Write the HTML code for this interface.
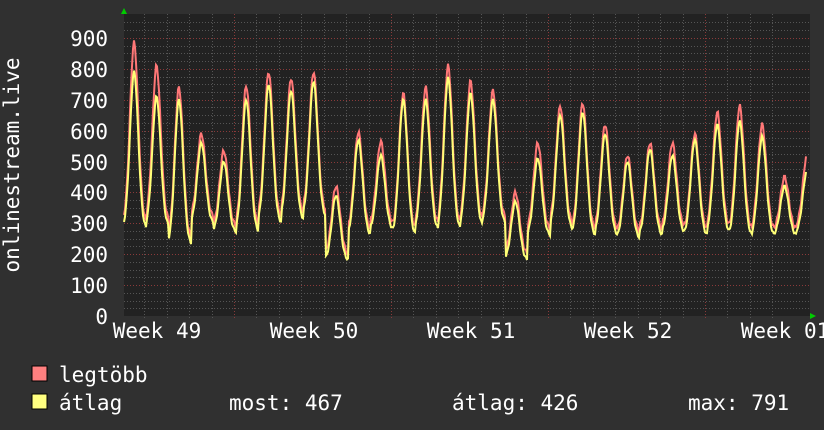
<!DOCTYPE html>
<html><head><meta charset="utf-8"><style>
html,body{margin:0;padding:0;background:#303030;}
svg{display:block}
text{font-family:"DejaVu Sans Mono","Liberation Mono",monospace;fill:#fff;font-size:21px}
</style></head><body>
<svg id="g" width="824" height="430" xmlns="http://www.w3.org/2000/svg">
<rect width="824" height="430" fill="#303030"/>
<rect x="124" y="14" width="686" height="302" fill="#222"/>
<g id="grid"></g>
<polyline id="red" fill="none" stroke="#ff7777" stroke-width="2"/>
<polyline id="yel" fill="none" stroke="#ffff77" stroke-width="2"/>
<polygon points="121,14 127,14 124,8" fill="#0c0"/>
<polygon points="810,313 810,319 816,316" fill="#0c0"/>
<g text-anchor="end">
<text x="108" y="46">900</text><text x="108" y="77">800</text><text x="108" y="108">700</text>
<text x="108" y="139">600</text><text x="108" y="170">500</text><text x="108" y="200">400</text>
<text x="108" y="231">300</text><text x="108" y="262">200</text><text x="108" y="293">100</text>
<text x="108" y="324">0</text>
</g>
<g text-anchor="middle">
<text x="157" y="338">Week 49</text><text x="314" y="338">Week 50</text>
<text x="471" y="338">Week 51</text><text x="628" y="338">Week 52</text>
<text x="785" y="338">Week 01</text>
</g>
<text transform="translate(19,165) rotate(-90)" text-anchor="middle">onlinestream.live</text>
<rect x="32" y="366" width="15" height="15" fill="#ff8080" stroke="#000"/>
<rect x="32" y="394" width="15" height="15" fill="#ffff80" stroke="#000"/>
<text x="59" y="382">legtöbb</text>
<text x="59" y="410">átlag</text>
<text x="229" y="410">most: 467</text>
<text x="452" y="410">átlag: 426</text>
<text x="688" y="410">max: 791</text>
</svg>
<script>
var NS="http://www.w3.org/2000/svg",g=document.getElementById('grid');
function ln(x1,y1,x2,y2,c){var l=document.createElementNS(NS,'line');l.setAttribute('x1',x1);l.setAttribute('y1',y1);l.setAttribute('x2',x2);l.setAttribute('y2',y2);l.setAttribute('stroke',c);l.setAttribute('stroke-width',1);l.setAttribute('stroke-dasharray','1,2');g.appendChild(l);}
function Y(v){return 316-v*0.309;}
for(var v=25;v<=950;v+=25){var y=Math.round(Y(v))+.5;if(y<14)break;ln(124,y,810,y,v%100==0?'#8a3a3a':'#555');}
for(var i=0;i<32;i++){var x=Math.round(77+i*22.43)+.5;if(x<124||x>810)continue;ln(x,14,x,320,((i)%7==0)?'#8a3a3a':'#555');}
var pk=[[885,790],[810,710],[740,700],[590,560],[535,500],[745,700],[790,750],[770,730],[790,760],[420,390],[595,570],[565,520],[720,700],[740,700],[810,770],[760,720],[730,700],[400,370],[560,510],[680,650],[690,660],[620,590],[520,500],[560,540],[560,520],[590,570],[660,620],[680,630],[620,580],[450,420],[520,470]];
var tr=[280,290,230,300,270,270,300,310,320,180,260,280,260,280,280,290,300,180,260,280,260,260,250,260,270,260,270,260,260,260,270];
var r=[],yl=[];
for(var x=124;x<=806;x++){var t=(x-124)/22.43,d=Math.floor(t),f=t-d;d=Math.min(d,pk.length-1);
var s=Math.exp(-Math.pow((f-0.45)/0.26,2));var sh=(f>0.1&&f<0.8)?0.12:0;s=Math.max(s,sh);
var wig=Math.sin(x*1.7)*7;
var b=tr[d];var rv=b+20+(pk[d][0]-b-20)*s+wig;var yv=b+(pk[d][1]-b)*s+wig*0.6;
r.push(x+','+Y(rv).toFixed(1));yl.push(x+','+Y(yv).toFixed(1));}
document.getElementById('red').setAttribute('points',r.join(' '));
document.getElementById('yel').setAttribute('points',yl.join(' '));
</script>
</body></html>
